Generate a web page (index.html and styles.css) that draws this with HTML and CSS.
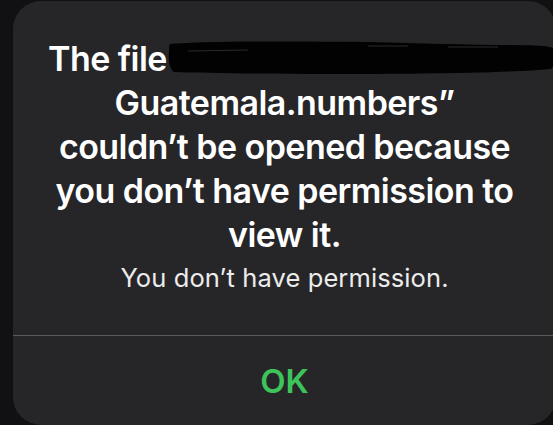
FILE: index.html
```html
<!DOCTYPE html>
<html lang="en">
<head>
<meta charset="utf-8">
<title>Alert</title>
<link rel="stylesheet" href="styles.css">
</head>
<body>
<div class="screen">
  <div class="alert">
    <div class="alert-body">
      <div class="title">
        <div class="title-first">
          <span>The file</span>
          <svg class="redaction" width="388" height="36" viewBox="0 0 388 36" aria-hidden="true">
            <path d="M2 4 C40 1 120 1 200 2 C250 3 300 5 340 5 C370 5 386 6 387 10 C388 18 386 27 383 29 C340 33 240 34 160 34 C100 34 40 33 6 32 C2 30 0 20 1 12 C1 8 1 5 2 4 Z" fill="#020202"/>
            <path d="M20 11 L80 10 M200 6 L240 6 M280 7 L330 7" stroke="#2a2a2a" stroke-width="1" fill="none"/>
          </svg>
        </div>
        <div class="title-line">Guatemala.numbers”</div>
        <div class="title-line">couldn’t be opened because</div>
        <div class="title-line">you don’t have permission to</div>
        <div class="title-line">view it.</div>
      </div>
      <div class="message">You don’t have permission.</div>
    </div>
    <div class="alert-actions">
      <button class="action" type="button">OK</button>
    </div>
  </div>
</div>
</body>
</html>
```

FILE: styles.css
```css
html, body {
  margin: 0;
  padding: 0;
}

body {
  width: 553px;
  height: 425px;
  overflow: hidden;
  background: #111113;
  font-family: Inter, "Noto Sans", "Liberation Sans", sans-serif;
}

.screen {
  padding: 1px 0 0 13px;
}

.alert {
  width: 543px;
  height: 424px;
  background: #262628;
  border-radius: 28px;
  display: flex;
  flex-direction: column;
}

.alert-body {
  padding: 36px 0 42px;
  text-align: center;
  color: #ffffff;
}

.title {
  font-size: 34px;
  font-weight: 600;
  line-height: 44px;
  letter-spacing: -0.55px;
}

.title-first {
  display: flex;
  align-items: center;
  padding-left: 35px;
  height: 44px;
  gap: 1px;
  white-space: nowrap;
}

.redaction {
  flex-shrink: 0;
  margin-top: -2px;
}

.title-line {
  white-space: nowrap;
}

.message {
  margin-top: 6px;
  font-size: 25.5px;
  font-weight: 400;
  line-height: 30px;
  letter-spacing: 0.1px;
  color: #ececec;
}

.alert-actions {
  flex: 1;
  border-top: 1px solid #5a5a5c;
  display: flex;
}

.action {
  flex: 1;
  background: none;
  border: 0;
  padding: 0;
  font-family: inherit;
  font-size: 33px;
  font-weight: 600;
  color: #3ec35b;
}
```
